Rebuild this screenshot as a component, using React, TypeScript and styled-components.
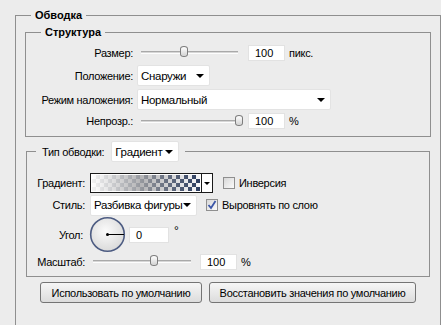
import styled, { createGlobalStyle } from 'styled-components'

const GlobalStyle = createGlobalStyle`
  html, body {
    margin: 0;
    height: 325px;
    overflow: hidden;
    background: #ececec;
    font-family: 'Liberation Sans', Arial, sans-serif;
    font-size: 11px;
    letter-spacing: -0.3px;
    color: #000;
  }
`

const Page = styled.div`
  padding: 8px 0 0 15px;
`

const Group = styled.fieldset<{ $w: number; $ml: number; $mt: number; $pad: string; $h?: number; $open?: boolean }>`
  box-sizing: border-box;
  width: ${({ $w }) => $w}px;
  ${({ $h }) => ($h ? `height: ${$h}px;` : '')}
  margin: ${({ $mt }) => $mt}px 0 0 ${({ $ml }) => $ml}px;
  padding: ${({ $pad }) => $pad};
  border: 1px solid #8f8f8f;
  ${({ $open }) => ($open ? 'border-bottom: none;' : '')}
  min-width: 0;
`

const Title = styled.legend<{ $ml: number }>`
  margin-left: ${({ $ml }) => $ml}px;
  padding: 0 4px;
  font-weight: bold;
  line-height: 14px;
  letter-spacing: 0;
`

const ComboLegend = styled.legend`
  margin-left: 9px;
  padding: 0 6px;
  display: flex;
  align-items: center;
  gap: 7px;
`

const Stack = styled.div<{ $gap: number }>`
  display: flex;
  flex-direction: column;
  gap: ${({ $gap }) => $gap}px;
`

const Row = styled.div<{ $h: number }>`
  display: flex;
  align-items: center;
  height: ${({ $h }) => $h}px;
`

const Label = styled.div<{ $w: number }>`
  width: ${({ $w }) => $w}px;
  text-align: right;
  flex-shrink: 0;
  white-space: nowrap;
`

const Control = styled.div<{ $ml: number }>`
  margin-left: ${({ $ml }) => $ml}px;
  display: flex;
  align-items: center;
  align-self: stretch;
`

const Track = styled.div<{ $w: number; $ml: number }>`
  position: relative;
  width: ${({ $w }) => $w}px;
  margin-left: ${({ $ml }) => $ml}px;
  height: 1px;
  border-top: 1px solid #a9a9a9;
  border-bottom: 1px solid #fdfdfd;
  background: #d6d6d6;
`

const Thumb = styled.div`
  position: absolute;
  top: -6px;
  width: 8px;
  height: 11px;
  margin-left: -4px;
  box-sizing: border-box;
  border: 1px solid #7c7c7c;
  border-radius: 4px / 3px;
  background: linear-gradient(#ffffff, #d2d2d2);
`

const NumBox = styled.div<{ $w: number; $ml: number }>`
  box-sizing: border-box;
  width: ${({ $w }) => $w}px;
  height: 16px;
  margin-left: ${({ $ml }) => $ml}px;
  padding-left: 6px;
  background: #fff;
  border: 1px solid #e2e2e2;
  line-height: 14px;
  letter-spacing: 0;
`

const Unit = styled.span<{ $top?: boolean }>`
  margin-left: 4px;
  align-self: ${({ $top }) => ($top ? 'flex-start' : 'auto')};
  ${({ $top }) => ($top ? 'margin-top: 8px; margin-left: 5px; font-size: 12px;' : '')}
`

const Select = styled.div<{ $w: number }>`
  box-sizing: border-box;
  width: ${({ $w }) => $w}px;
  height: 21px;
  padding: 0 5px 0 3px;
  display: flex;
  align-items: center;
  justify-content: space-between;
  background: #fff;
  border: 1px solid #e3e3e3;
  border-radius: 2px;
  font-size: 11.5px;
  letter-spacing: -0.3px;
  white-space: nowrap;
`

const Arrow = styled.span`
  flex-shrink: 0;
  width: 0;
  height: 0;
  border-left: 4px solid transparent;
  border-right: 4px solid transparent;
  border-top: 4px solid #000;
`

const Swatch = styled.div`
  box-sizing: border-box;
  width: 123px;
  height: 20px;
  display: flex;
  border: 1px solid #1a1a1a;
  background: #fff;
`

const SwatchFill = styled.div`
  flex: 1;
  margin: 1px;
  display: flex;
`

const SwatchButton = styled.div`
  width: 10px;
  display: flex;
  align-items: center;
  justify-content: center;
  border-left: 1px solid #1a1a1a;
  background: #fff;
`

const SmallArrow = styled.span`
  width: 0;
  height: 0;
  border-left: 3px solid transparent;
  border-right: 3px solid transparent;
  border-top: 3px solid #000;
`

const Check = styled.div<{ $ml: number }>`
  box-sizing: border-box;
  width: 12px;
  height: 12px;
  margin-left: ${({ $ml }) => $ml}px;
  border: 1px solid #8f8f8f;
  background: linear-gradient(135deg, #d8d8d8, #fbfbfb);
  display: flex;
  align-items: center;
  justify-content: center;
`

const CheckText = styled.span`
  margin-left: 4px;
`

const Buttons = styled.div`
  display: flex;
  gap: 7px;
  margin: 5px 0 0 24px;
`

const Button = styled.button<{ $w: number }>`
  box-sizing: border-box;
  width: ${({ $w }) => $w}px;
  height: 21px;
  padding: 0;
  border: 1px solid #747474;
  border-radius: 3px;
  background: linear-gradient(#f6f6f6, #dcdcdc);
  font-family: inherit;
  font-size: 11px;
  letter-spacing: -0.3px;
  color: #000;
`

const Slider = ({ w, ml, pos }: { w: number; ml: number; pos: number }) => (
  <Track $w={w} $ml={ml}>
    <Thumb style={{ left: `${pos * 100}%` }} />
  </Track>
)

const Dropdown = ({ w, text }: { w: number; text: string }) => (
  <Select $w={w}>
    <span>{text}</span>
    <Arrow />
  </Select>
)

const Checkbox = ({ checked, label, ml }: { checked?: boolean; label: string; ml: number }) => (
  <>
    <Check $ml={ml}>
      {checked && (
        <svg width="10" height="10" viewBox="0 0 10 10">
          <path d="M1.5 5 L4 8 L8.5 1" fill="none" stroke="#3b56a8" strokeWidth="1.8" />
        </svg>
      )}
    </Check>
    <CheckText>{label}</CheckText>
  </>
)

const GradientPreview = () => (
  <svg width="100%" height="100%" preserveAspectRatio="none">
    <defs>
      <linearGradient id="ga" x1="0" x2="1" y1="0" y2="0">
        <stop offset="0" stopColor="#f2f2f2" />
        <stop offset="0.5" stopColor="#8c8f96" />
        <stop offset="1" stopColor="#2c3d60" />
      </linearGradient>
      <linearGradient id="gb" x1="0" x2="1" y1="0" y2="0">
        <stop offset="0" stopColor="#ffffff" />
        <stop offset="0.45" stopColor="#b4b4b6" />
        <stop offset="1" stopColor="#f6f6f8" />
      </linearGradient>
      <pattern id="chk" width="8" height="8" patternUnits="userSpaceOnUse">
        <rect width="4" height="4" fill="#fff" />
        <rect x="4" y="4" width="4" height="4" fill="#fff" />
      </pattern>
      <mask id="m">
        <rect width="100%" height="100%" fill="url(#chk)" />
      </mask>
    </defs>
    <rect width="100%" height="100%" fill="url(#ga)" />
    <rect width="100%" height="100%" fill="url(#gb)" mask="url(#m)" />
  </svg>
)

const Dial = () => (
  <svg width="37" height="37" viewBox="0 0 37 37">
    <defs>
      <radialGradient id="dial" cx="0.45" cy="0.4" r="0.6">
        <stop offset="0" stopColor="#fbfbfb" />
        <stop offset="1" stopColor="#dadada" />
      </radialGradient>
    </defs>
    <circle cx="18.5" cy="18.5" r="16.8" fill="url(#dial)" stroke="#4d5c82" strokeWidth="1.6" />
    <line x1="18.5" y1="18.5" x2="35" y2="18.5" stroke="#000" strokeWidth="1" />
    <circle cx="18.5" cy="18.5" r="1.5" fill="#000" />
  </svg>
)

export default function App() {
  return (
    <Page>
      <GlobalStyle />
      <Group $w={426} $h={317} $open $ml={0} $mt={0} $pad="0">
        <Title $ml={15}>Обводка</Title>

        <Group $w={406} $ml={9} $mt={3} $pad="4px 0 7px 0">
          <Title $ml={15}>Структура</Title>
          <Stack $gap={3}>
            <Row $h={19}>
              <Label $w={107}>Размер:</Label>
              <Control $ml={4}>
                <Slider w={97} ml={4} pos={0.44} />
                <NumBox $w={37} $ml={10}>100</NumBox>
                <Unit>пикс.</Unit>
              </Control>
            </Row>
            <Row $h={21}>
              <Label $w={107}>Положение:</Label>
              <Control $ml={4}>
                <Dropdown w={73} text="Снаружи" />
              </Control>
            </Row>
            <Row $h={21}>
              <Label $w={107}>Режим наложения:</Label>
              <Control $ml={4}>
                <Dropdown w={194} text="Нормальный" />
              </Control>
            </Row>
            <Row $h={16}>
              <Label $w={107}>Непрозр.:</Label>
              <Control $ml={4}>
                <Slider w={97} ml={4} pos={1.01} />
                <NumBox $w={37} $ml={10}>100</NumBox>
                <Unit>%</Unit>
              </Control>
            </Row>
          </Stack>
        </Group>

        <Group $w={404} $ml={10} $mt={4} $pad="10px 0 6px 0">
          <ComboLegend>
            <span>Тип обводки:</span>
            <Dropdown w={68} text="Градиент" />
          </ComboLegend>
          <Stack $gap={0}>
            <Row $h={22}>
              <Label $w={58}>Градиент:</Label>
              <Control $ml={5}>
                <Swatch>
                  <SwatchFill>
                    <GradientPreview />
                  </SwatchFill>
                  <SwatchButton>
                    <SmallArrow />
                  </SwatchButton>
                </Swatch>
                <Checkbox label="Инверсия" ml={10} />
              </Control>
            </Row>
            <Row $h={22}>
              <Label $w={58}>Стиль:</Label>
              <Control $ml={5}>
                <Dropdown w={107} text="Разбивка фигуры" />
                <Checkbox checked label="Выровнять по слою" ml={9} />
              </Control>
            </Row>
            <Row $h={37}>
              <Label $w={56}>Угол:</Label>
              <Control $ml={6}>
                <Dial />
                <NumBox $w={40} $ml={3}>0</NumBox>
                <Unit $top>°</Unit>
              </Control>
            </Row>
            <Row $h={17}>
              <Label $w={58}>Масштаб:</Label>
              <Control $ml={5}>
                <Slider w={98} ml={3} pos={0.62} />
                <NumBox $w={37} $ml={9}>100</NumBox>
                <Unit>%</Unit>
              </Control>
            </Row>
          </Stack>
        </Group>

        <Buttons>
          <Button $w={162}>Использовать по умолчанию</Button>
          <Button $w={207}>Восстановить значения по умолчанию</Button>
        </Buttons>
      </Group>
    </Page>
  )
}
